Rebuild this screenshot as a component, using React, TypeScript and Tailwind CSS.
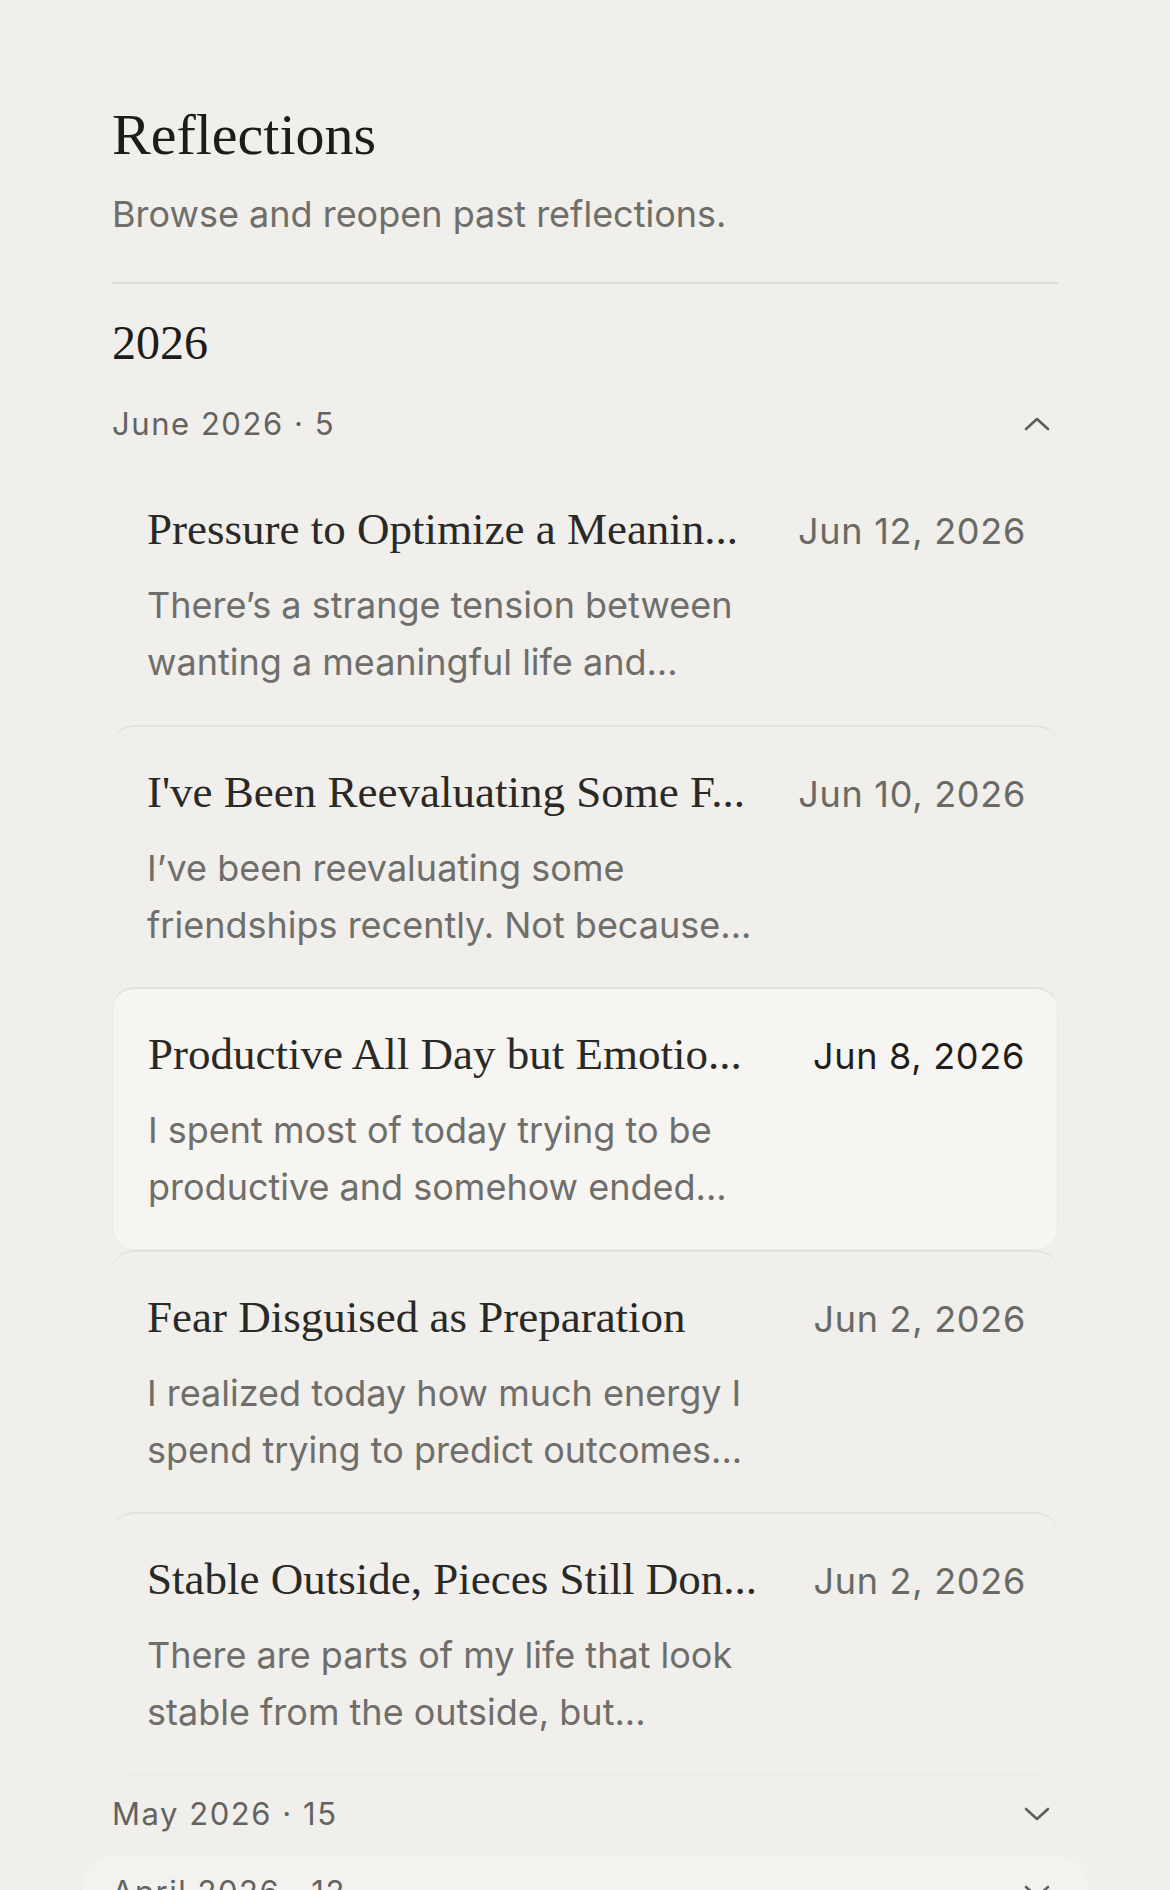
import { Fragment } from "react";

type Entry = {
  title: string;
  excerpt: [string, string];
  date: string;
  active?: boolean;
};

const june: Entry[] = [
  {
    title: "Pressure to Optimize a Meanin...",
    excerpt: ["There\u2019s a strange tension between", "wanting a meaningful life and..."],
    date: "Jun 12, 2026",
  },
  {
    title: "I've Been Reevaluating Some F...",
    excerpt: ["I\u2019ve been reevaluating some", "friendships recently. Not because..."],
    date: "Jun 10, 2026",
  },
  {
    title: "Productive All Day but Emotio...",
    excerpt: ["I spent most of today trying to be", "productive and somehow ended..."],
    date: "Jun 8, 2026",
    active: true,
  },
  {
    title: "Fear Disguised as Preparation",
    excerpt: ["I realized today how much energy I", "spend trying to predict outcomes..."],
    date: "Jun 2, 2026",
  },
  {
    title: "Stable Outside, Pieces Still Don...",
    excerpt: ["There are parts of my life that look", "stable from the outside, but..."],
    date: "Jun 2, 2026",
  },
];

const serif = "font-['Liberation_Serif',_'Times_New_Roman',_serif]";
const sans = "font-['Inter',_'Liberation_Sans',_sans-serif]";

function Chevron({ up }: { up?: boolean }) {
  return (
    <svg width="28" height="18" viewBox="0 0 28 18" fill="none" className="mr-[7px]">
      <polyline
        points={up ? "3,14 14,4 25,14" : "3,4 14,14 25,4"}
        stroke="#5f5e5a"
        strokeWidth="2.6"
        strokeLinecap="round"
        strokeLinejoin="round"
      />
    </svg>
  );
}

function MonthRow({ label, open }: { label: string; open?: boolean }) {
  return (
    <div className="flex h-[40px] items-center justify-between">
      <span className={`${sans} text-[31px] leading-[40px] tracking-[0.05em] text-[#64635f]`}>
        {label}
      </span>
      <Chevron up={open} />
    </div>
  );
}

function EntryCard({ entry, first, last }: { entry: Entry; first: boolean; last: boolean }) {
  let frame = "border-t-2 border-[#e3e1dc] pb-[33px]";
  if (first) frame = "pb-[34px]";
  if (entry.active) frame = "bg-[#f6f5f2] border border-[#eceae6] border-t-2 border-t-[#e3e1dc] pb-[33px]";
  if (last) frame = "border-t-2 border-t-[#e3e1dc] border-b border-b-[#e9e8e4] pb-[33px]";
  return (
    <div className={`rounded-[22px] pl-[35px] pr-[32px] pt-[38px] ${frame}`}>
      <div className="flex items-baseline justify-between">
        <span className={`${serif} whitespace-nowrap text-[45px] leading-[54px] text-[#2a2926]`}>
          {entry.title}
        </span>
        <span
          className={`${sans} whitespace-nowrap text-[36px] leading-[54px] tracking-[0.02em] ${
            entry.active ? "text-[#1f1e1c]" : "text-[#6a6964]"
          }`}
        >
          {entry.date}
        </span>
      </div>
      <p className={`${sans} mt-[19px] text-[36px] leading-[57px] text-[#6f6e6a]`}>
        {entry.excerpt.map((line, i) => (
          <Fragment key={i}>
            {line}
            {i === 0 && <br />}
          </Fragment>
        ))}
      </p>
    </div>
  );
}

export default function App() {
  return (
    <div className="min-h-[1890px] overflow-hidden bg-[#f0efeb] px-[112px] pt-[100px]">
      <h1 className={`${serif} text-[58px] leading-[70px] text-[#1d1c1a]`}>Reflections</h1>
      <p className={`${sans} mt-[22px] text-[36px] leading-[44px] text-[#6f6e69]`}>
        Browse and reopen past reflections.
      </p>

      <div className="mt-[46px] h-[2px] bg-[#dddbd6]" />

      <h2 className={`${serif} mt-[30px] text-[48px] leading-[58px] text-[#1d1c1a]`}>2026</h2>

      <div className="mt-[32px]">
        <MonthRow label="June 2026 · 5" open />
      </div>

      <div className="mt-[20px] flex flex-col">
        {june.map((entry, i) => (
          <EntryCard key={i} entry={entry} first={i === 0} last={i === june.length - 1} />
        ))}
      </div>

      <div className="mt-[19px]">
        <MonthRow label="May 2026 · 15" />
      </div>

      <div className="-mx-[30px] mt-[22px] rounded-[30px] bg-[#f3f2ef] px-[30px] pt-[16px] pb-[40px]">
        <MonthRow label="April 2026 · 12" />
      </div>
    </div>
  );
}
